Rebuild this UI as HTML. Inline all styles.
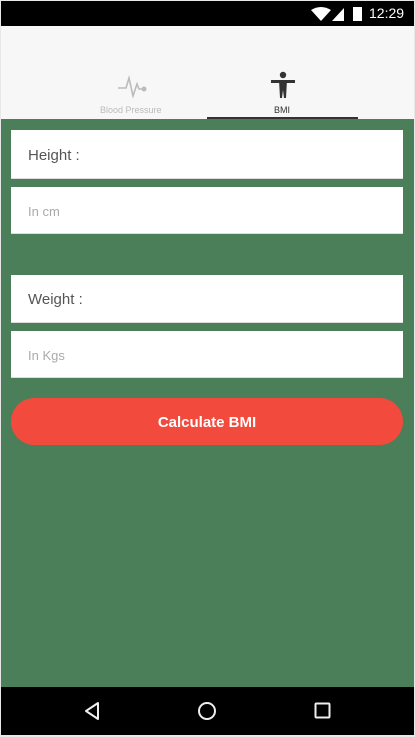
<!DOCTYPE html>
<html><head><style>
html,body{margin:0;padding:0;}
body{width:415px;height:737px;position:relative;background:#e8e8e8;font-family:"Liberation Sans",sans-serif;overflow:hidden;}
.abs{position:absolute;}
#status{left:1px;top:1px;width:413px;height:25px;background:#000;}
#head{left:1px;top:26px;width:413px;height:93px;background:#f7f7f7;}
#green{left:1px;top:119px;width:413px;height:568px;background:#4b7f5a;}
#nav{left:1px;top:687px;width:413px;height:48px;background:#000;}
.box{position:absolute;left:11px;width:392px;background:#fff;border-bottom:1px solid #ddd;}
.lbl{position:absolute;left:17px;font-size:15px;color:#555;}
.ph{position:absolute;left:17px;font-size:13px;color:#aaa;}
#btn{left:11px;top:398px;width:392px;height:47px;border-radius:24px;background:#f24a3c;color:#fff;font-size:15px;font-weight:bold;text-align:center;line-height:49px;}
</style></head><body>
<div id="status" class="abs">
<svg class="abs" style="left:310px;top:6px" width="20" height="14"><path d="M0 3 Q10 -3 20 3 L10 14 Z" fill="#fff"/></svg>
<svg class="abs" style="left:331px;top:7px" width="12" height="13"><path d="M12 0 V13 H0 Z" fill="#fff"/></svg>
<div class="abs" style="left:352px;top:6px;width:9px;height:14px;background:#fff"></div>
<div class="abs" style="left:368px;top:4px;color:#fff;font-size:14px">12:29</div>
</div>
<div id="head" class="abs">
<svg class="abs" style="left:116px;top:46px" width="32" height="26"><path d="M1 16 H9 L12 6 L16 24 L20 12 L22 17 H27" stroke="#bbb" stroke-width="1.6" fill="none"/><circle cx="27" cy="17" r="2.5" fill="#bbb"/></svg>
<div class="abs" style="left:99px;top:79px;font-size:9px;color:#bbb">Blood Pressure</div>
<svg class="abs" style="left:269px;top:45px" width="26" height="28"><circle cx="13" cy="4" r="3.2" fill="#333"/><rect x="1" y="9" width="24" height="3" fill="#333"/><path d="M9 9 H17 L16 27 H14 L13 19 L12 27 H10 Z" fill="#333"/></svg>
<div class="abs" style="left:273px;top:79px;font-size:9px;color:#333">BMI</div>
<div class="abs" style="left:206px;top:91px;width:151px;height:2px;background:#333"></div>
</div>
<div id="green" class="abs"></div>
<div class="box" style="top:130px;height:48px"><div class="lbl" style="top:17px">Height :</div></div>
<div class="box" style="top:187px;height:46px"><div class="ph" style="top:17px">In cm</div></div>
<div class="box" style="top:275px;height:47px"><div class="lbl" style="top:16px">Weight :</div></div>
<div class="box" style="top:331px;height:46px"><div class="ph" style="top:17px">In Kgs</div></div>
<div id="btn" class="abs">Calculate BMI</div>
<div id="nav" class="abs">
<svg class="abs" style="left:82px;top:14px" width="18" height="20"><path d="M15 2 L3 10 L15 18 Z" stroke="#eee" stroke-width="2" fill="none" stroke-linejoin="round"/></svg>
<svg class="abs" style="left:196px;top:14px" width="20" height="20"><circle cx="10" cy="10" r="8" stroke="#eee" stroke-width="2" fill="none"/></svg>
<svg class="abs" style="left:313px;top:15px" width="18" height="18"><rect x="1.5" y="1.5" width="14" height="14" rx="1" stroke="#eee" stroke-width="2" fill="none"/></svg>
</div>
</body></html>
